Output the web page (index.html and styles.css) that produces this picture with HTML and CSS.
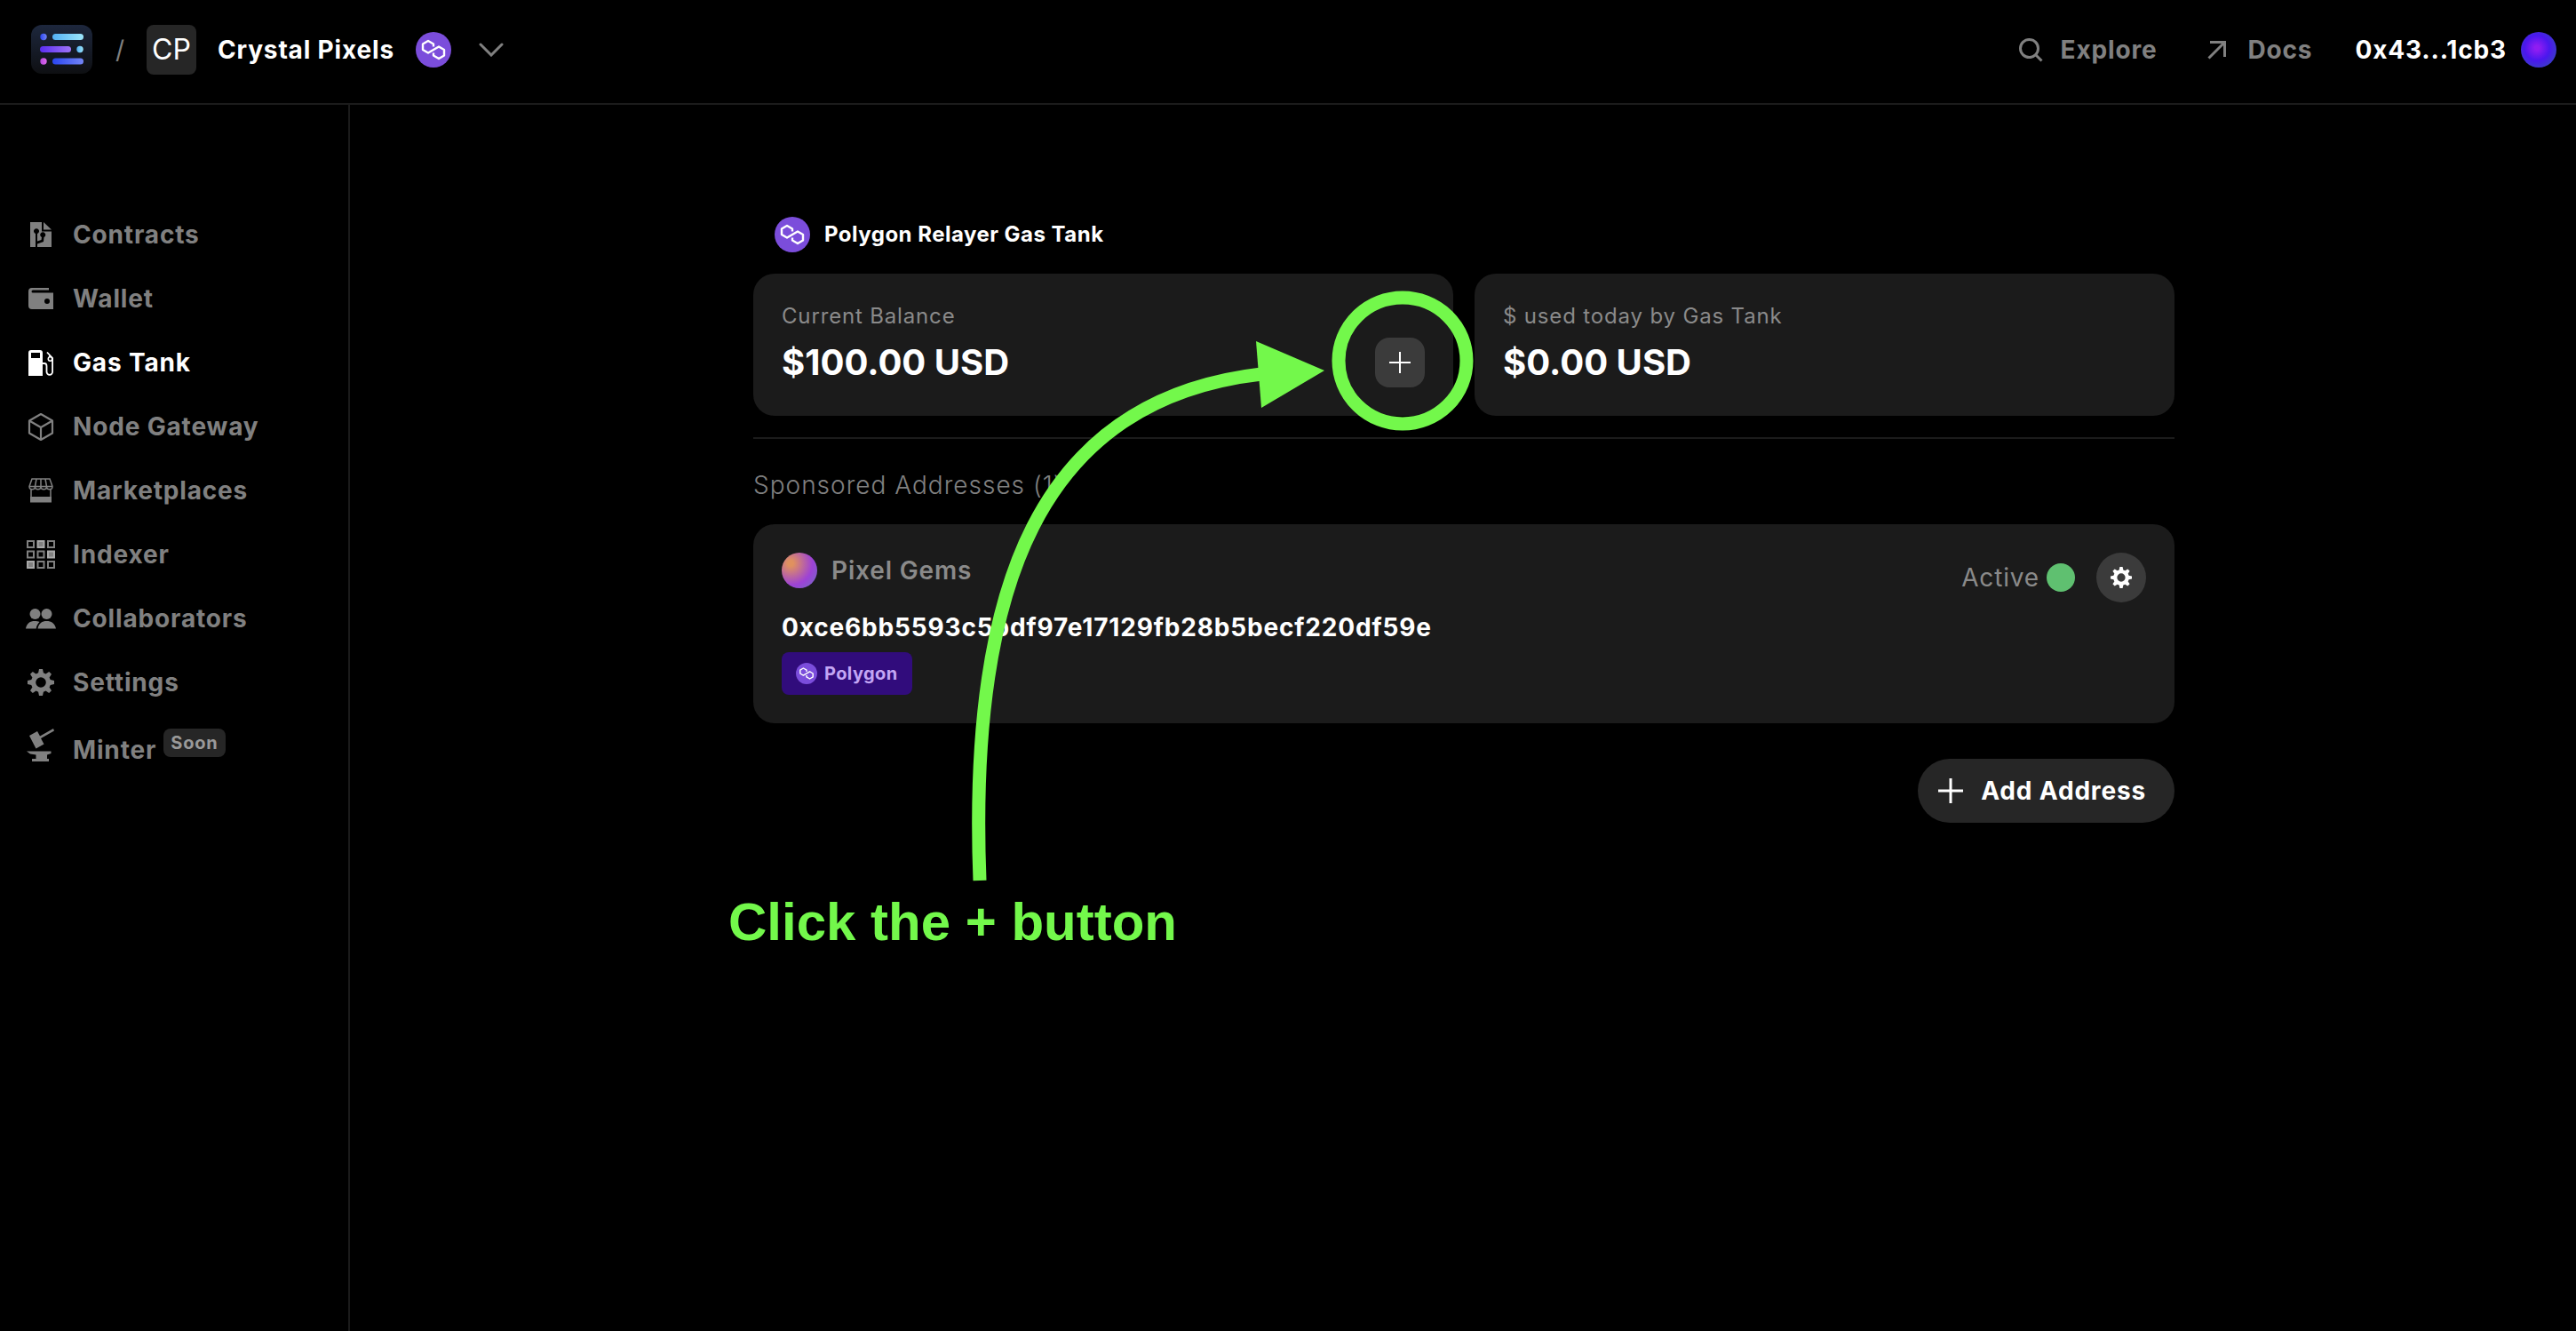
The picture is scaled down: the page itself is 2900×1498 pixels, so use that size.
FILE: index.html
```html
<!DOCTYPE html>
<html lang="en">
<head>
<meta charset="utf-8">
<meta name="viewport" content="width=device-width, initial-scale=1">
<title>Gas Tank – Crystal Pixels</title>
<link rel="stylesheet" href="styles.css">
</head>
<body>
<svg class="defs" aria-hidden="true">
  <symbol id="polygon" viewBox="0 0 40 40">
    <circle cx="20" cy="20" r="20" fill="#7b4ddb"/>
    <path d="M20 16.500V13.500L14 10L8 13.500v6.500l6 3.500L26 16.500L32 20v6.500l-6 3.500L20 26.500v-3" fill="none" stroke="#fff" stroke-width="2.400" stroke-linejoin="round"/>
  </symbol>
  <symbol id="gear" viewBox="0 0 30 30">
    <path fill-rule="evenodd" fill="currentColor" d="M13 0h4l.9 4.300 2.600 1.100L24.200 3 27 5.800 24.600 9.500l1.100 2.600L30 13v4l-4.300.9-1.100 2.600L27 24.200 24.200 27l-3.700-2.400-2.600 1.100L17 30h-4l-.9-4.300-2.600-1.100L5.800 27 3 24.200l2.400-3.700-1.100-2.600L0 17v-4l4.300-.9 1.100-2.600L3 5.800 5.800 3l3.700 2.400 2.600-1.100zM15 9.200a5.800 5.800 0 1 0 0 11.600 5.800 5.800 0 0 0 0-11.600z"/>
  </symbol>
</svg>

<header class="topbar">
  <div class="crumbs">
    <a class="logo" href="#" aria-label="Home">
      <svg width="69" height="56" viewBox="0 0 69 56">
        <defs>
          <linearGradient id="bg" x1="0" y1="0" x2="0" y2="1"><stop offset="0" stop-color="#1d273d"/><stop offset="1" stop-color="#0e0f12"/></linearGradient>
          <linearGradient id="sky"><stop offset="0" stop-color="#53b1f5"/><stop offset="1" stop-color="#9ce6fa"/></linearGradient>
          <linearGradient id="violet"><stop offset="0" stop-color="#5a2df2"/><stop offset="1" stop-color="#9f74f6"/></linearGradient>
          <linearGradient id="blue"><stop offset="0" stop-color="#2a45f0"/><stop offset="1" stop-color="#7385f6"/></linearGradient>
          <linearGradient id="pink"><stop offset="0" stop-color="#b446dd"/><stop offset="1" stop-color="#e16bf0"/></linearGradient>
        </defs>
        <rect width="69" height="55" rx="12" fill="url(#bg)"/>
        <circle cx="14" cy="13.500" r="3.700" fill="url(#blue)"/>
        <rect x="24" y="10" width="35" height="7" rx="3.500" fill="url(#sky)"/>
        <rect x="10" y="24" width="35" height="7" rx="3.500" fill="url(#violet)"/>
        <circle cx="55" cy="27.500" r="3.700" fill="url(#sky)"/>
        <circle cx="14" cy="41" r="3.700" fill="url(#pink)"/>
        <rect x="24" y="37.500" width="35" height="7" rx="3.500" fill="url(#blue)"/>
      </svg>
    </a>
    <span class="slash">/</span>
    <button class="project" type="button">
      <span class="initials">CP</span>
      <span class="project-name">Crystal Pixels</span>
      <svg width="40" height="40"><use href="#polygon"/></svg>
      <svg class="chevron" width="28" height="16" viewBox="0 0 28 16"><path d="M2 2l12 12L26 2" fill="none" stroke="#808080" stroke-width="3" stroke-linecap="round"/></svg>
    </button>
  </div>
  <nav class="toplinks" aria-label="Account">
    <a class="toplink" href="#"><svg width="28" height="28" viewBox="0 0 28 28" fill="none" stroke="currentColor" stroke-width="3"><circle cx="12.500" cy="12.500" r="10"/><path d="M19.500 19.500l7 7"/></svg>Explore</a>
    <a class="toplink" href="#"><svg width="28" height="28" viewBox="0 0 28 28" fill="none" stroke="currentColor" stroke-width="3"><path d="M6 5.500h16.500V22M22 6L4.500 23.500"/></svg>Docs</a>
    <a class="account" href="#">0x43...1cb3<span class="avatar"></span></a>
  </nav>
</header>

<div class="shell">
  <nav class="sidebar" aria-label="Main">
    <a class="item" href="#"><svg viewBox="0 0 36 36"><path fill="currentColor" d="M6 4h13v10.500h11V32H14v-3.500l7-2.500.500-5a3 3 0 1 0-2.500 0l-.5 3L14 25.500V17a3 3 0 1 0-2 0v15H6zM21 4l9 8.500h-9z"/></svg>Contracts</a>
    <a class="item" href="#"><svg viewBox="0 0 36 36"><path fill="currentColor" fill-rule="evenodd" d="M8 6h19v2.500H9a1.500 1.500 0 0 0 0 3h23V30H8a4 4 0 0 1-4-4V10a4 4 0 0 1 4-4zM25 18a3 3 0 1 0 0 6 3 3 0 0 0 0-6z"/></svg>Wallet</a>
    <a class="item active" href="#" aria-current="page"><svg viewBox="0 0 36 36"><path fill="currentColor" fill-rule="evenodd" d="M7 4h10a3 3 0 0 1 3 3v26H4V7a3 3 0 0 1 3-3zM7 7v6h10V7z"/><path fill="none" stroke="currentColor" stroke-width="1.800" d="M20 19h2q2.500 0 2.500 3v6.500a3.300 3.300 0 0 0 6.600 0V13L25 6.500M28 9.500v2.500"/><circle cx="28.500" cy="14" r="2.200" fill="none" stroke="currentColor" stroke-width="1.600"/></svg>Gas Tank</a>
    <a class="item" href="#"><svg viewBox="0 0 36 36"><path fill="none" stroke="currentColor" stroke-width="2.200" stroke-linejoin="round" d="M18 4l13 7.500v14L18 33 5 25.500v-14zM5 11.500l13 7.500 13-7.500M18 19v14"/></svg>Node Gateway</a>
    <a class="item" href="#"><svg viewBox="0 0 36 36"><path fill="none" stroke="currentColor" stroke-width="1.500" d="M8 5h20l3 8.500a3.200 3.200 0 0 1-6.500 0 3.200 3.200 0 0 1-6.500 0 3.200 3.200 0 0 1-6.500 0 3.200 3.200 0 0 1-6.500 0zM5 13.500h26M13 5l-1.500 8.500M18 5v8.500M23 5l1.500 8.500M7 17v14M29 17v14"/><path fill="currentColor" d="M6 25h24v6.500H6z"/></svg>Marketplaces</a>
    <a class="item" href="#"><svg viewBox="0 0 36 36"><g fill="none" stroke="currentColor" stroke-width="2"><path d="M3 3h7v7H3zM26 3h7v7h-7zM3 14.500h7v7H3zM14.500 14.500h7v7h-7zM14.500 26h7v7h-7zM26 26h7v7h-7z"/><path fill="#808080" stroke="#a8a8a8" d="M14.500 3h7v7h-7zM26 14.500h7v7h-7zM3 26h7v7H3z"/></g></svg>Indexer</a>
    <a class="item" href="#"><svg viewBox="0 0 36 36"><g fill="currentColor"><circle cx="11.500" cy="13" r="6"/><circle cx="24.500" cy="13" r="6"/><path d="M1 29.500c1-6 5-8.500 10-8.500 2 0 4 .3 5.500 1-2 2-3.500 4.500-3.800 7.500zM14.500 29.500c1-6 5-8.500 10-8.500s9.500 2.500 10.500 8.500z"/></g></svg>Collaborators</a>
    <a class="item" href="#"><svg viewBox="-3 -3 36 36"><use href="#gear" width="30" height="30"/></svg>Settings</a>
    <a class="item minter" href="#"><svg viewBox="0 0 36 36"><g fill="currentColor"><path d="M5 8l9-5 3 5.500L32 0l1 2.500-15 8.500 3.500 6.500-9 5zM2 25.500h27.500V28L25 29.500V34h2v3H8v-3h4.500v-4.500L6 28.500z"/></g></svg><span>Minter</span><span class="soon">Soon</span></a>
  </nav>

  <main class="main">
    <div class="column">
      <h1 class="title"><svg width="40" height="40"><use href="#polygon"/></svg>Polygon Relayer Gas Tank</h1>
      <section class="stats">
        <div class="card stat">
          <div><p class="label">Current Balance</p><p class="value">$100.00 USD</p></div>
          <button class="plus" type="button" aria-label="Add funds">
            <svg width="24" height="24" viewBox="0 0 24 24"><path d="M12 0v24M0 12h24" stroke="#fff" stroke-width="2"/></svg>
          </button>
          <div class="note">
            <svg width="680" height="680" viewBox="0 0 680 680" aria-hidden="true">
              <ellipse cx="599" cy="86" rx="72" ry="71" fill="none" stroke="#73f84b" stroke-width="15"/>
              <path d="M123 671C110 340 190 130 440 101" fill="none" stroke="#73f84b" stroke-width="15"/>
              <path d="M434 64l77 33-71 42z" fill="#73f84b"/>
            </svg>
            <span class="note-text">Click the + button</span>
          </div>
        </div>
        <div class="card stat">
          <div><p class="label">$ used today by Gas Tank</p><p class="value">$0.00 USD</p></div>
        </div>
      </section>
      <h2 class="subtitle">Sponsored Addresses (1)</h2>
      <article class="card address">
        <div>
          <h3 class="name"><span class="gem"></span>Pixel Gems</h3>
          <p class="hash">0xce6bb5593c5bdf97e17129fb28b5becf220df59e</p>
          <span class="chain"><svg width="24" height="24"><use href="#polygon"/></svg>Polygon</span>
        </div>
        <div class="status">Active<span class="dot"></span>
          <button class="settings" type="button" aria-label="Address settings"><svg width="24" height="24"><use href="#gear"/></svg></button>
        </div>
      </article>
      <button class="add" type="button"><svg width="28" height="28" viewBox="0 0 28 28"><path d="M14 0v28M0 14h28" stroke="#fff" stroke-width="3"/></svg>Add Address</button>
    </div>
  </main>
</div>
</body>
</html>
```
FILE: styles.css
```css
* { box-sizing: border-box; }
body {
  margin: 0;
  min-height: 100vh;
  display: flex;
  flex-direction: column;
  background: #000;
  color: #fff;
  font: 700 28px/40px Inter, "Liberation Sans", sans-serif;
  letter-spacing: 0.03em;
}
h1, h2, h3, p { margin: 0; font: inherit; }
a { color: inherit; text-decoration: none; }
button { border: 0; padding: 0; color: inherit; font: inherit; letter-spacing: inherit; cursor: pointer; }
svg { flex: none; }
.defs { position: absolute; width: 0; height: 0; }

.topbar {
  display: flex;
  justify-content: space-between;
  padding: 28px 22px 32px 35px;
  border-bottom: 2px solid #1b1b1b;
}
.crumbs, .project, .toplinks, .toplink, .account { display: flex; align-items: center; }
.logo { display: flex; }
.slash { margin: 0 24px 0 26px; color: #808080; font-weight: 400; }
.project { background: none; }
.initials {
  width: 56px;
  margin-right: 24px;
  border-radius: 8px;
  background: #262626;
  font-size: 32px;
  font-weight: 400;
  line-height: 56px;
  letter-spacing: 0;
}
.project-name { margin-right: 24px; }
.chevron { margin-left: 31px; }
.toplinks { gap: 48px; }
.toplink { gap: 20px; color: #808080; }
.toplink:first-child { margin-right: 6px; }
.account { gap: 16px; }
.avatar {
  width: 40px;
  height: 40px;
  border-radius: 50%;
  background: radial-gradient(circle at 45% 45%, #8f1df2 8%, #4a17ee 45%, #2f57a8 100%);
}

.shell { flex: 1; display: flex; }
.sidebar {
  flex: none;
  width: 394px;
  display: flex;
  flex-direction: column;
  gap: 32px;
  padding: 126px 28px;
  border-right: 2px solid #1b1b1b;
}
.item { display: flex; align-items: center; gap: 18px; color: #808080; }
.item svg { width: 36px; height: 36px; overflow: visible; }
.active { color: #fff; }
.minter { align-items: flex-end; }
.minter svg { align-self: flex-start; }
.soon {
  margin: 0 0 12px -10px;
  padding: 0 8px;
  border-radius: 8px;
  background: #262626;
  color: #999;
  font-size: 20px;
  line-height: 32px;
}

.main { flex: 1; padding: 126px 48px 126px 50px; }
.column { max-width: 1600px; margin: 0 auto; }
.title {
  display: flex;
  gap: 16px;
  padding: 0 24px;
  font-size: 24px;
  letter-spacing: 0.02em;
}
.stats {
  display: grid;
  grid-template-columns: 1fr 1fr;
  gap: 24px;
  padding: 24px 0;
  border-bottom: 2px solid #1b1b1b;
}
.card {
  display: flex;
  justify-content: space-between;
  padding: 32px;
  border-radius: 24px;
  background: #1b1b1b;
}
.stat { position: relative; align-items: center; padding: 28px 32px; }
.label { color: #8a8a8a; font-size: 24px; font-weight: 400; }
.value { font-size: 40px; line-height: 64px; letter-spacing: 0; }
.plus {
  display: grid;
  place-items: center;
  width: 56px;
  height: 56px;
  margin-top: 40px;
  border-radius: 16px;
  background: #3b3b3b;
}
.subtitle { padding: 32px 0 24px; color: #808080; font-weight: 300; letter-spacing: 1px; }
.name { display: flex; gap: 16px; color: #8a8a8a; font-weight: 600; }
.gem {
  width: 40px;
  height: 40px;
  border-radius: 50%;
  background: radial-gradient(circle at 25% 30%, #e0915f 8%, #9d42d6 60%, #7f5fc8 85%, #6f80b4 100%);
}
.hash { margin: 24px 0 8px; }
.chain {
  display: inline-flex;
  align-items: center;
  gap: 8px;
  padding: 0 16px;
  border-radius: 8px;
  background: #310c7c;
  color: #c3a6f5;
  font-size: 20px;
  line-height: 48px;
  letter-spacing: 0.02em;
  vertical-align: top;
}
.status { display: flex; align-items: center; align-self: flex-start; gap: 8px; color: #8a8a8a; font-weight: 400; }
.dot { width: 32px; height: 32px; border-radius: 50%; background: #5fc070; }
.settings {
  display: grid;
  place-items: center;
  width: 56px;
  height: 56px;
  margin-left: 16px;
  border-radius: 50%;
  background: #3b3b3b;
  color: #fff;
}
.add {
  display: flex;
  align-items: center;
  gap: 20px;
  height: 72px;
  margin: 40px 0 0 auto;
  padding: 0 32px 0 23px;
  border-radius: 36px;
  background: #262626;
}

/* Callout that points at the plus button, over the cards */
.note {
  position: absolute;
  top: 12px;
  right: -44px;
  z-index: 1;
  width: 700px;
  color: #73f84b;
  pointer-events: none;
}
.note svg { display: block; }
.note-text {
  display: block;
  margin-left: -160px;
  font: 700 60px/76px "Liberation Sans", sans-serif;
  letter-spacing: 0;
}
```
